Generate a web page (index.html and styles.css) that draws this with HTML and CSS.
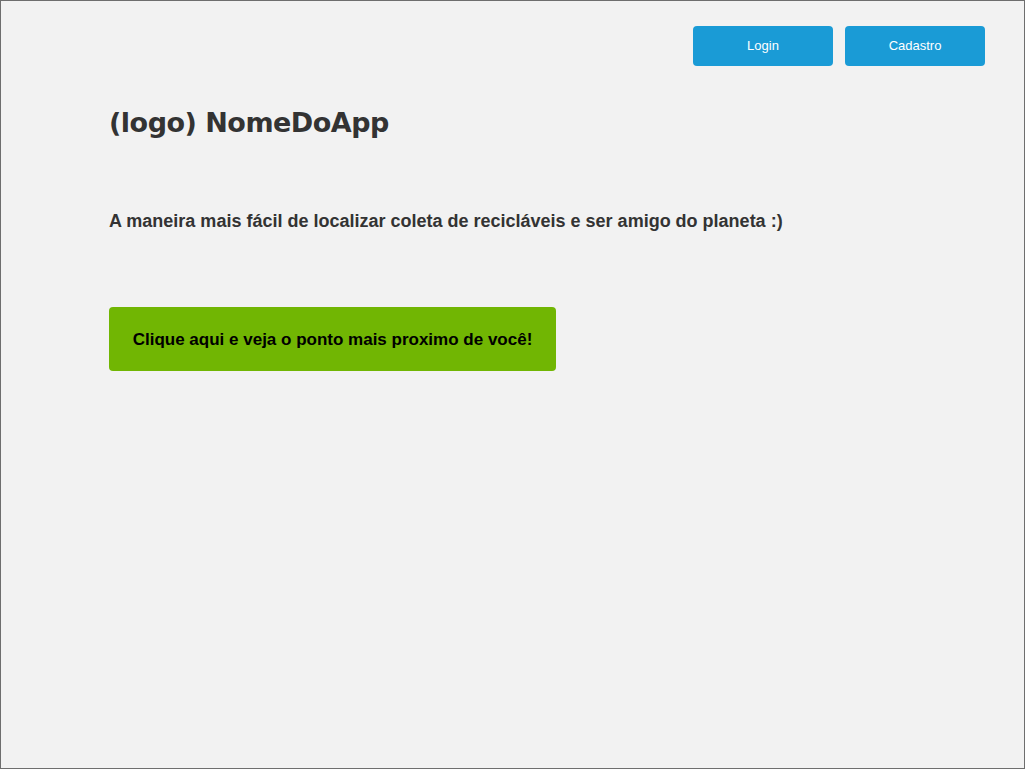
FILE: index.html
```html
<!DOCTYPE html>
<html lang="pt">
<head>
<meta charset="utf-8">
<title>NomeDoApp</title>
<link rel="stylesheet" href="styles.css">
</head>
<body>
<div class="page">
  <header class="topbar">
    <button class="nav-btn">Login</button>
    <button class="nav-btn">Cadastro</button>
  </header>
  <main class="content">
    <h1 class="brand">(logo) NomeDoApp</h1>
    <p class="tagline">A maneira mais fácil de localizar coleta de recicláveis e ser amigo do planeta :)</p>
    <button class="cta">Clique aqui e veja o ponto mais proximo de você!</button>
  </main>
</div>
</body>
</html>
```

FILE: styles.css
```css
html, body {
  margin: 0;
  padding: 0;
}
body {
  width: 1025px;
  height: 769px;
  overflow: hidden;
  font-family: "Liberation Sans", Arial, sans-serif;
}
.page {
  box-sizing: border-box;
  width: 1025px;
  height: 769px;
  border: 1px solid #6e6e6e;
  background: #f2f2f2;
  display: flex;
  flex-direction: column;
}
.topbar {
  display: flex;
  justify-content: flex-end;
  gap: 12px;
  padding: 25px 39px 0 0;
}
.nav-btn {
  width: 140px;
  height: 40px;
  border: none;
  border-radius: 4px;
  background: #1a9bd6;
  color: #ffffff;
  font-family: "Liberation Sans", Arial, sans-serif;
  font-size: 13px;
  padding: 0 0 2px 0;
}
.content {
  padding-left: 108px;
  display: flex;
  flex-direction: column;
  align-items: flex-start;
}
.brand {
  margin: 40px 0 0 0;
  font-family: "DejaVu Sans", Verdana, sans-serif;
  font-weight: bold;
  font-size: 27px;
  line-height: 34px;
  color: #333333;
  letter-spacing: -0.5px;
}
.tagline {
  margin: 70px 0 0 0;
  font-size: 18px;
  font-weight: bold;
  line-height: 22px;
  color: #333333;
}
.cta {
  margin-top: 75px;
  width: 447px;
  height: 64px;
  border: none;
  border-radius: 4px;
  background: #71b603;
  color: #000000;
  font-family: "Liberation Sans", Arial, sans-serif;
  font-size: 17px;
  font-weight: bold;
  padding: 2px 0 0 0;
}
```
